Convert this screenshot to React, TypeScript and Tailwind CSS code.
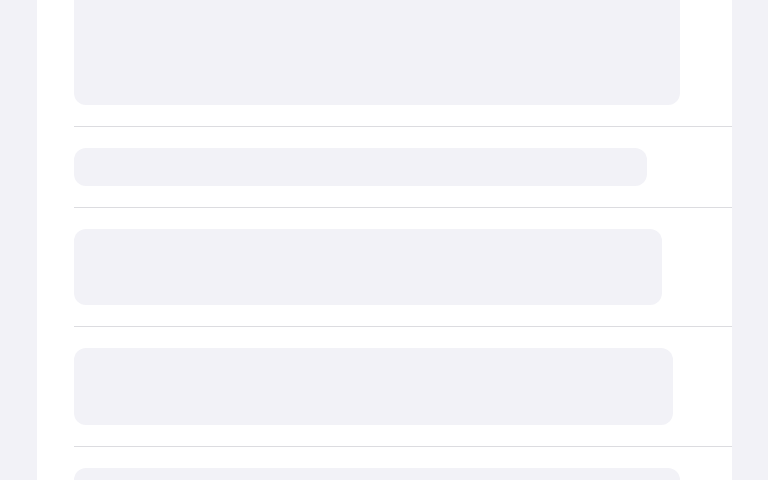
import React from "react";

const rows = [
  { w: "w-[606px]", h: "h-[160px]" },
  { w: "w-[573px]", h: "h-[38px]" },
  { w: "w-[588px]", h: "h-[76px]" },
  { w: "w-[599px]", h: "h-[77px]" },
  { w: "w-[606px]", h: "h-[77px]" },
];

const App = () => {
  return (
    <div className="h-[480px] w-[768px] overflow-hidden bg-[#f2f2f7] font-['Liberation_Sans',sans-serif]">
      <div className="ml-[37px] w-[695px] h-full bg-white overflow-hidden">
        <div className="-mt-[76px] pl-[37px]">
          {rows.map((r, i) => (
            <div key={i} className="border-b border-[#dcdce0] py-[21px]">
              <div className={`${r.w} ${r.h} rounded-xl bg-[#f2f2f7]`} />
            </div>
          ))}
        </div>
      </div>
    </div>
  );
};

export default App;
